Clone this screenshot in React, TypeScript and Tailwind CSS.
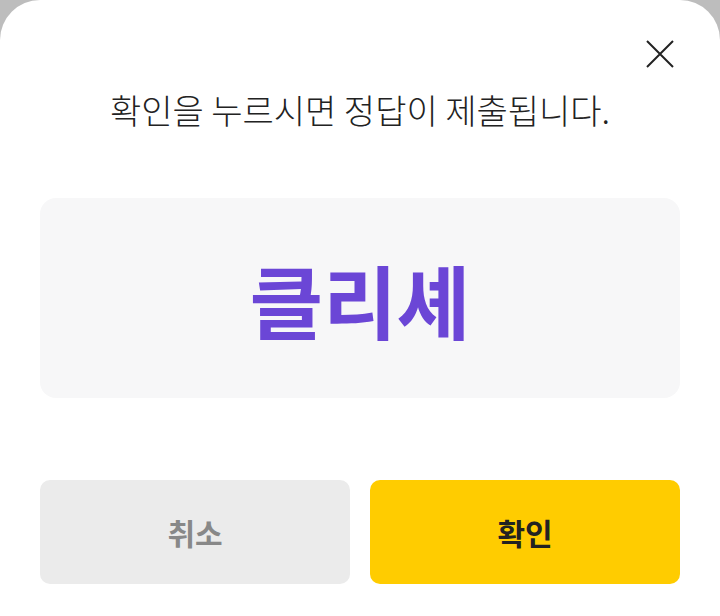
const font = { fontFamily: '"Noto Sans CJK KR", "Noto Sans", sans-serif' };

export default function App() {
  return (
    <div className="h-[616px] w-[720px] overflow-hidden bg-[#bdbdbd]" style={font}>
      <div className="flex h-full flex-col rounded-t-[40px] bg-white px-10 pt-10">
        <div className="flex h-7 justify-end pr-[6px]">
          <button type="button" aria-label="닫기" className="text-[#222]">
            <svg width="28" height="28" viewBox="0 0 28 28" fill="none" stroke="currentColor" strokeWidth="2">
              <path d="M1 1 27 27M27 1 1 27" />
            </svg>
          </button>
        </div>

        <p className="mt-[18px] text-center text-[34px] leading-[48px] font-light text-[#222]">
          확인을 누르시면 정답이 제출됩니다.
        </p>

        <div className="mt-16 flex h-[200px] items-center justify-center rounded-2xl bg-[#f7f7f8]">
          <span className="text-[80px] leading-none font-bold text-[#6b46d6]">
            클리셰
          </span>
        </div>

        <div className="mt-[82px] grid grid-cols-2 gap-5">
          <button
            type="button"
            className="h-[104px] rounded-[10px] bg-[#ebebeb] text-[30px] font-bold text-[#888]"
          >
            취소
          </button>
          <button
            type="button"
            className="h-[104px] rounded-[10px] bg-[#ffcc00] text-[30px] font-bold text-[#222]"
          >
            확인
          </button>
        </div>
      </div>
    </div>
  );
}
